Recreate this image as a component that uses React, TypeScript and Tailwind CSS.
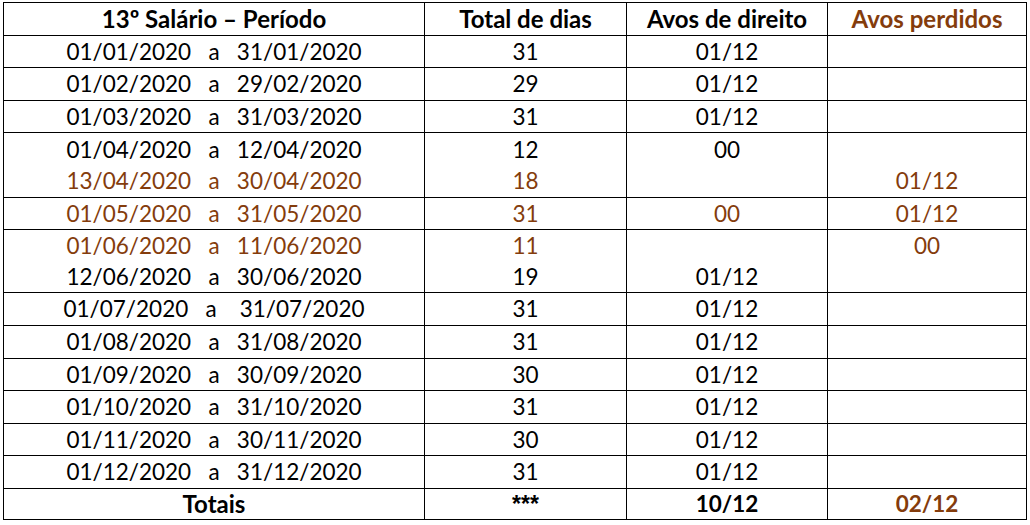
import React from "react";

const B = "text-[#843c0c]";

type Line = { text: string; brown?: boolean };
type Row = {
  h: string;
  c1: Line[];
  c2: Line[];
  c3: (Line | null)[];
  c4: (Line | null)[];
};

const L = (text: string, brown = false): Line => ({ text, brown });

const rows: Row[] = [
  { h: "h-[32px]", c1: [L("01/01/2020   a   31/01/2020")], c2: [L("31")], c3: [L("01/12")], c4: [null] },
  { h: "h-[33px]", c1: [L("01/02/2020   a   29/02/2020")], c2: [L("29")], c3: [L("01/12")], c4: [null] },
  { h: "h-[32px]", c1: [L("01/03/2020   a   31/03/2020")], c2: [L("31")], c3: [L("01/12")], c4: [null] },
  {
    h: "h-[65px]",
    c1: [L("01/04/2020   a   12/04/2020"), L("13/04/2020   a   30/04/2020", true)],
    c2: [L("12"), L("18", true)],
    c3: [L("00"), null],
    c4: [null, L("01/12", true)],
  },
  { h: "h-[32px]", c1: [L("01/05/2020   a   31/05/2020", true)], c2: [L("31", true)], c3: [L("00", true)], c4: [L("01/12", true)] },
  {
    h: "h-[63px]",
    c1: [L("01/06/2020   a   11/06/2020", true), L("12/06/2020   a   30/06/2020")],
    c2: [L("11", true), L("19")],
    c3: [null, L("01/12")],
    c4: [L("00", true), null],
  },
  { h: "h-[33px]", c1: [L("01/07/2020   a    31/07/2020")], c2: [L("31")], c3: [L("01/12")], c4: [null] },
  { h: "h-[33px]", c1: [L("01/08/2020   a   31/08/2020")], c2: [L("31")], c3: [L("01/12")], c4: [null] },
  { h: "h-[32px]", c1: [L("01/09/2020   a   30/09/2020")], c2: [L("30")], c3: [L("01/12")], c4: [null] },
  { h: "h-[33px]", c1: [L("01/10/2020   a   31/10/2020")], c2: [L("31")], c3: [L("01/12")], c4: [null] },
  { h: "h-[32px]", c1: [L("01/11/2020   a   30/11/2020")], c2: [L("30")], c3: [L("01/12")], c4: [null] },
  { h: "h-[33px]", c1: [L("01/12/2020   a   31/12/2020")], c2: [L("31")], c3: [L("01/12")], c4: [null] },
];

function Cell({ lines, w }: { lines: (Line | null)[]; w: string }) {
  return (
    <div className={`${w} border-r border-black flex flex-col justify-center`}>
      {lines.map((l, i) => (
        <div key={i} className={`h-[31px] flex items-center justify-center whitespace-pre ${l && l.brown ? B : "text-black"}`}>
          {l ? l.text : ""}
        </div>
      ))}
    </div>
  );
}

export default function App() {
  return (
    <div className="w-[1030px] h-[525px] bg-white pt-[2px] pl-[3px] font-['Lato',sans-serif] text-[22.5px]">
      <div className="w-[1024px] border-t border-l border-black">
        <div className="flex h-[33px] border-b border-black font-bold text-[24px]">
          <div className="w-[421px] border-r border-black flex items-center justify-center text-black">13º Salário – Período</div>
          <div className="w-[202px] border-r border-black flex items-center justify-center text-black">Total de dias</div>
          <div className="w-[201px] border-r border-black flex items-center justify-center text-black">Avos de direito</div>
          <div className={`w-[199px] border-r border-black flex items-center justify-center ${B}`}>Avos perdidos</div>
        </div>
        {rows.map((r, i) => (
          <div key={i} className={`flex ${r.h} border-b border-black`}>
            <Cell lines={r.c1} w="w-[421px]" />
            <Cell lines={r.c2} w="w-[202px]" />
            <Cell lines={r.c3} w="w-[201px]" />
            <Cell lines={r.c4} w="w-[199px]" />
          </div>
        ))}
        <div className="flex h-[31px] border-b border-black font-bold">
          <div className="w-[421px] border-r border-black flex items-center justify-center text-black text-[24px]">Totais</div>
          <div className="w-[202px] border-r border-black flex items-center justify-center text-black font-['Liberation_Sans',sans-serif] text-[23px]">***</div>
          <div className="w-[201px] border-r border-black flex items-center justify-center text-black">10/12</div>
          <div className={`w-[199px] border-r border-black flex items-center justify-center ${B}`}>02/12</div>
        </div>
      </div>
    </div>
  );
}
